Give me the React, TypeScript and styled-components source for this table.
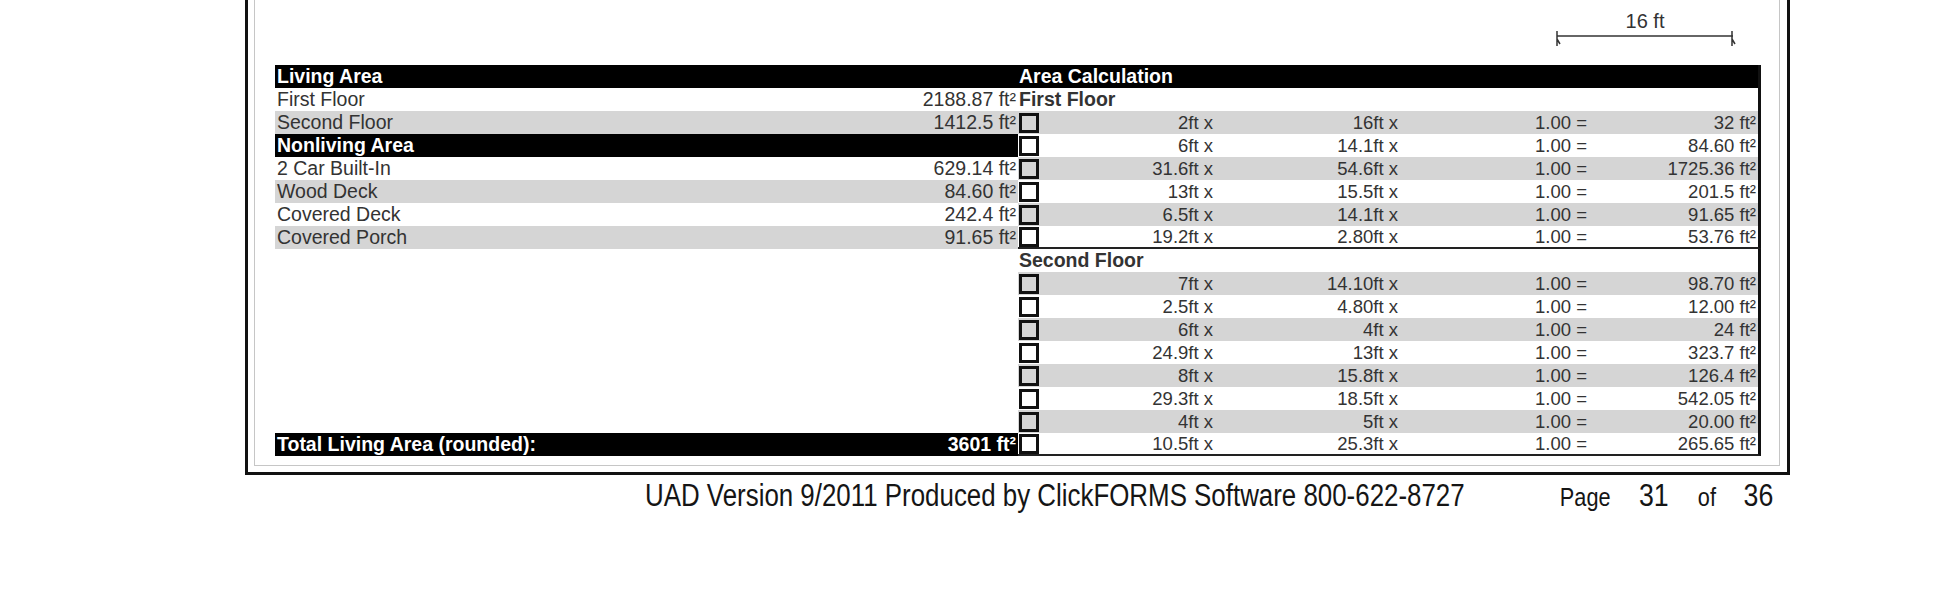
import React from "react";
import styled, { createGlobalStyle } from "styled-components";

const GlobalStyle = createGlobalStyle`
  html, body { margin: 0; padding: 0; background: #fff; }
  body { font-family: "Liberation Sans", Arial, sans-serif; color: #2e2e2e; }
`;

const Page = styled.div`
  width: 1944px;
  height: 597px;
  overflow: hidden;
`;

const Frame = styled.div`
  margin-left: 245px;
  width: 1545px;
  box-sizing: border-box;
  border: 3px solid #111;
  border-top: 0;
  padding: 0 7px 6px 6px;
`;

const Inner = styled.div`
  border: 1px solid #c6c6c6;
  border-top: 0;
  padding: 0 18px 9px 20px;
`;

const ScaleArea = styled.div`
  height: 65px;
  box-sizing: border-box;
  display: flex;
  justify-content: flex-end;
  padding: 12px 25px 0 0;
`;

const ScaleBar = styled.div`
  width: 182px;
  display: flex;
  flex-direction: column;
  align-items: center;
`;

const ScaleLabel = styled.span`
  font-size: 20px;
  line-height: 18px;
  color: #333;
`;

const Table = styled.div`
  display: grid;
  grid-template-columns: 743px 743px;
  grid-auto-rows: 23px;
`;

type Tone = "white" | "gray" | "black";

const toneBg = (t: Tone) => (t === "black" ? "#000" : t === "gray" ? "#d5d5d5" : "#fff");

const LeftCell = styled.div<{ $tone: Tone }>`
  display: flex;
  justify-content: space-between;
  align-items: center;
  padding: 0 2px;
  font-size: 19.5px;
  white-space: nowrap;
  background: ${(p) => toneBg(p.$tone)};
  color: ${(p) => (p.$tone === "black" ? "#fff" : "#333")};
  font-weight: ${(p) => (p.$tone === "black" ? 700 : 400)};
`;

const RightCell = styled.div<{ $tone: Tone; $ruled?: boolean }>`
  display: grid;
  grid-template-columns: 23px 172px 185px 189px 1fr;
  align-items: center;
  box-sizing: border-box;
  padding-right: 2px;
  border-right: 3px solid #111;
  border-bottom: ${(p) => (p.$ruled ? "2px solid #222" : "0")};
  background: ${(p) => toneBg(p.$tone)};
  font-size: 18.5px;
  white-space: nowrap;
  color: #333;
`;

const Heading = styled.span<{ $light?: boolean }>`
  grid-column: 1 / -1;
  padding-left: 1px;
  font-weight: 700;
  font-size: 19.5px;
  color: ${(p) => (p.$light ? "#fff" : "#333")};
`;

const Check = styled.span`
  width: 20px;
  height: 20px;
  box-sizing: border-box;
  border: 3px solid #111;
  margin-left: 1px;
`;

const Num = styled.span`
  text-align: right;
`;

/* the footer face is a condensed Arial; squeeze the installed one */
const Footer = styled.div`
  margin: 2px 0 0 645px;
  width: 1600px;
  display: flex;
  align-items: baseline;
  white-space: nowrap;
  color: #151515;
  line-height: 36px;
  transform: scaleX(0.835);
  transform-origin: left center;
`;

const FooterText = styled.span<{ $size: number; $gap?: number }>`
  flex-shrink: 0;
  font-size: ${(p) => p.$size}px;
  margin-left: ${(p) => p.$gap ?? 0}px;
`;

const leftRows: { tone: Tone; label: string; value: string }[] = [
  { tone: "black", label: "Living Area", value: "" },
  { tone: "white", label: "First Floor", value: "2188.87 ft²" },
  { tone: "gray", label: "Second Floor", value: "1412.5 ft²" },
  { tone: "black", label: "Nonliving Area", value: "" },
  { tone: "white", label: "2 Car Built-In", value: "629.14 ft²" },
  { tone: "gray", label: "Wood Deck", value: "84.60 ft²" },
  { tone: "white", label: "Covered Deck", value: "242.4 ft²" },
  { tone: "gray", label: "Covered Porch", value: "91.65 ft²" },
  { tone: "white", label: "", value: "" },
  { tone: "white", label: "", value: "" },
  { tone: "white", label: "", value: "" },
  { tone: "white", label: "", value: "" },
  { tone: "white", label: "", value: "" },
  { tone: "white", label: "", value: "" },
  { tone: "white", label: "", value: "" },
  { tone: "white", label: "", value: "" },
  { tone: "black", label: "Total Living Area (rounded):", value: "3601 ft²" },
];

type Calc = { a: string; b: string; area: string };

const firstFloor: Calc[] = [
  { a: "2ft x", b: "16ft x", area: "32 ft²" },
  { a: "6ft x", b: "14.1ft x", area: "84.60 ft²" },
  { a: "31.6ft x", b: "54.6ft x", area: "1725.36 ft²" },
  { a: "13ft x", b: "15.5ft x", area: "201.5 ft²" },
  { a: "6.5ft x", b: "14.1ft x", area: "91.65 ft²" },
  { a: "19.2ft x", b: "2.80ft x", area: "53.76 ft²" },
];

const secondFloor: Calc[] = [
  { a: "7ft x", b: "14.10ft x", area: "98.70 ft²" },
  { a: "2.5ft x", b: "4.80ft x", area: "12.00 ft²" },
  { a: "6ft x", b: "4ft x", area: "24 ft²" },
  { a: "24.9ft x", b: "13ft x", area: "323.7 ft²" },
  { a: "8ft x", b: "15.8ft x", area: "126.4 ft²" },
  { a: "29.3ft x", b: "18.5ft x", area: "542.05 ft²" },
  { a: "4ft x", b: "5ft x", area: "20.00 ft²" },
  { a: "10.5ft x", b: "25.3ft x", area: "265.65 ft²" },
];

function calcCells(rows: Calc[], prefix: string) {
  return rows.map((r, i) => (
    <RightCell key={prefix + i} $tone={i % 2 === 0 ? "gray" : "white"} $ruled={i === rows.length - 1}>
      <Check />
      <Num>{r.a}</Num>
      <Num>{r.b}</Num>
      <Num>1.00 =</Num>
      <Num>{r.area}</Num>
    </RightCell>
  ));
}

export default function App() {
  const rightCells = [
    <RightCell key="h" $tone="black">
      <Heading $light>Area Calculation</Heading>
    </RightCell>,
    <RightCell key="f1" $tone="white">
      <Heading>First Floor</Heading>
    </RightCell>,
    ...calcCells(firstFloor, "a"),
    <RightCell key="f2" $tone="white">
      <Heading>Second Floor</Heading>
    </RightCell>,
    ...calcCells(secondFloor, "b"),
  ];

  return (
    <Page>
      <GlobalStyle />
      <Frame>
        <Inner>
          <ScaleArea>
            <ScaleBar>
              <ScaleLabel>16 ft</ScaleLabel>
              <svg width="182" height="20" viewBox="0 0 182 20">
                <line x1="3" y1="6" x2="179" y2="6" stroke="#333" strokeWidth="1.5" />
                <path d="M3 1 L3 16 M3 9 L6 14" stroke="#333" strokeWidth="1.5" fill="none" />
                <path d="M178 1 L178 16 M178 9 L181 14" stroke="#333" strokeWidth="1.5" fill="none" />
              </svg>
            </ScaleBar>
          </ScaleArea>
          <Table>
            {leftRows.map((row, i) => (
              <React.Fragment key={i}>
                <LeftCell $tone={row.tone}>
                  <span>{row.label}</span>
                  <span>{row.value}</span>
                </LeftCell>
                {rightCells[i]}
              </React.Fragment>
            ))}
          </Table>
        </Inner>
      </Frame>
      <Footer>
        <FooterText $size={31}>UAD Version 9/2011 Produced by ClickFORMS Software 800-622-8727</FooterText>
        <FooterText $size={26} $gap={114}>Page</FooterText>
        <FooterText $size={32} $gap={34}>31</FooterText>
        <FooterText $size={26} $gap={35}>of</FooterText>
        <FooterText $size={32} $gap={33}>36</FooterText>
      </Footer>
    </Page>
  );
}
